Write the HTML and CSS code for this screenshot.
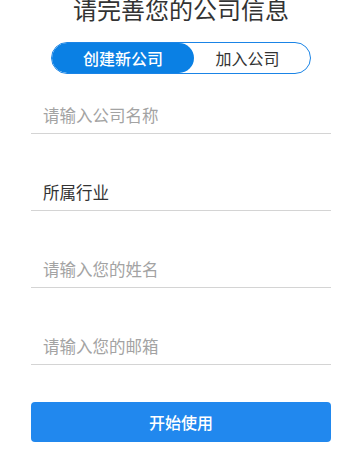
FILE: index.html
```html
<!DOCTYPE html>
<html lang="zh-CN">
<head>
    <meta charset="UTF-8">
    <meta name="viewport" content="width=device-width, initial-scale=1.0">
    <title>完善公司信息</title>
    <link rel="stylesheet" href="styles.css">
</head>
<body>
    <div class="page">
        <!-- 标题 -->
        <h1 class="title">请完善您的公司信息</h1>

        <!-- 切换 -->
        <div class="tabs">
            <div class="tab active">创建新公司</div>
            <div class="tab">加入公司</div>
        </div>

        <!-- 表单 -->
        <form class="form">
            <div class="field">
                <input type="text" placeholder="请输入公司名称">
            </div>
            <div class="field">
                <div class="select">所属行业</div>
            </div>
            <div class="field">
                <input type="text" placeholder="请输入您的姓名">
            </div>
            <div class="field">
                <input type="text" placeholder="请输入您的邮箱">
            </div>
            <button type="button" class="submit">开始使用</button>
        </form>
    </div>
</body>
</html>
```

FILE: styles.css
```css
* {
    margin: 0;
    padding: 0;
    box-sizing: border-box;
    font-family: 'Microsoft YaHei', "Noto Sans CJK SC", sans-serif;
}

body {
    background-color: #fff;
    color: #333;
}

.page {
    width: 362px;
    display: flex;
    flex-direction: column;
    align-items: center;
}

/* 标题 */
.title {
    margin-top: -7px;
    font-size: 24px;
    font-weight: normal;
    line-height: 32px;
    color: #333;
}

/* 切换 */
.tabs {
    margin-top: 17px;
    width: 260px;
    height: 32px;
    display: flex;
    border: 1px solid #1a84e6;
    border-radius: 16px;
    overflow: hidden;
}

.tab {
    display: flex;
    align-items: center;
    justify-content: center;
    font-size: 16px;
    color: #333;
    flex: 1;
    padding-right: 9px;
}

.tab.active {
    flex: 0 0 142px;
    padding-right: 0;
    background-color: #0a80e4;
    color: #fff;
    font-weight: 500;
    border-radius: 16px;
}

/* 表单 */
.form {
    margin-top: 26px;
    width: 300px;
    display: flex;
    flex-direction: column;
}

.field {
    height: 34px;
    margin-bottom: 43px;
    border-bottom: 1px solid #d4d4d4;
    display: flex;
    align-items: center;
}

.field input,
.field .select {
    width: 100%;
    border: none;
    outline: none;
    padding-left: 12px;
    padding-bottom: 4px;
    font-size: 16.5px;
    line-height: 22px;
    color: #333;
    background: transparent;
}

.field input::placeholder {
    color: #a3a3a3;
}

.submit {
    margin-top: -6px;
    height: 40px;
    border: none;
    border-radius: 4px;
    background-color: #2188ee;
    color: #fff;
    font-size: 16px;
    font-weight: 500;
}
```
